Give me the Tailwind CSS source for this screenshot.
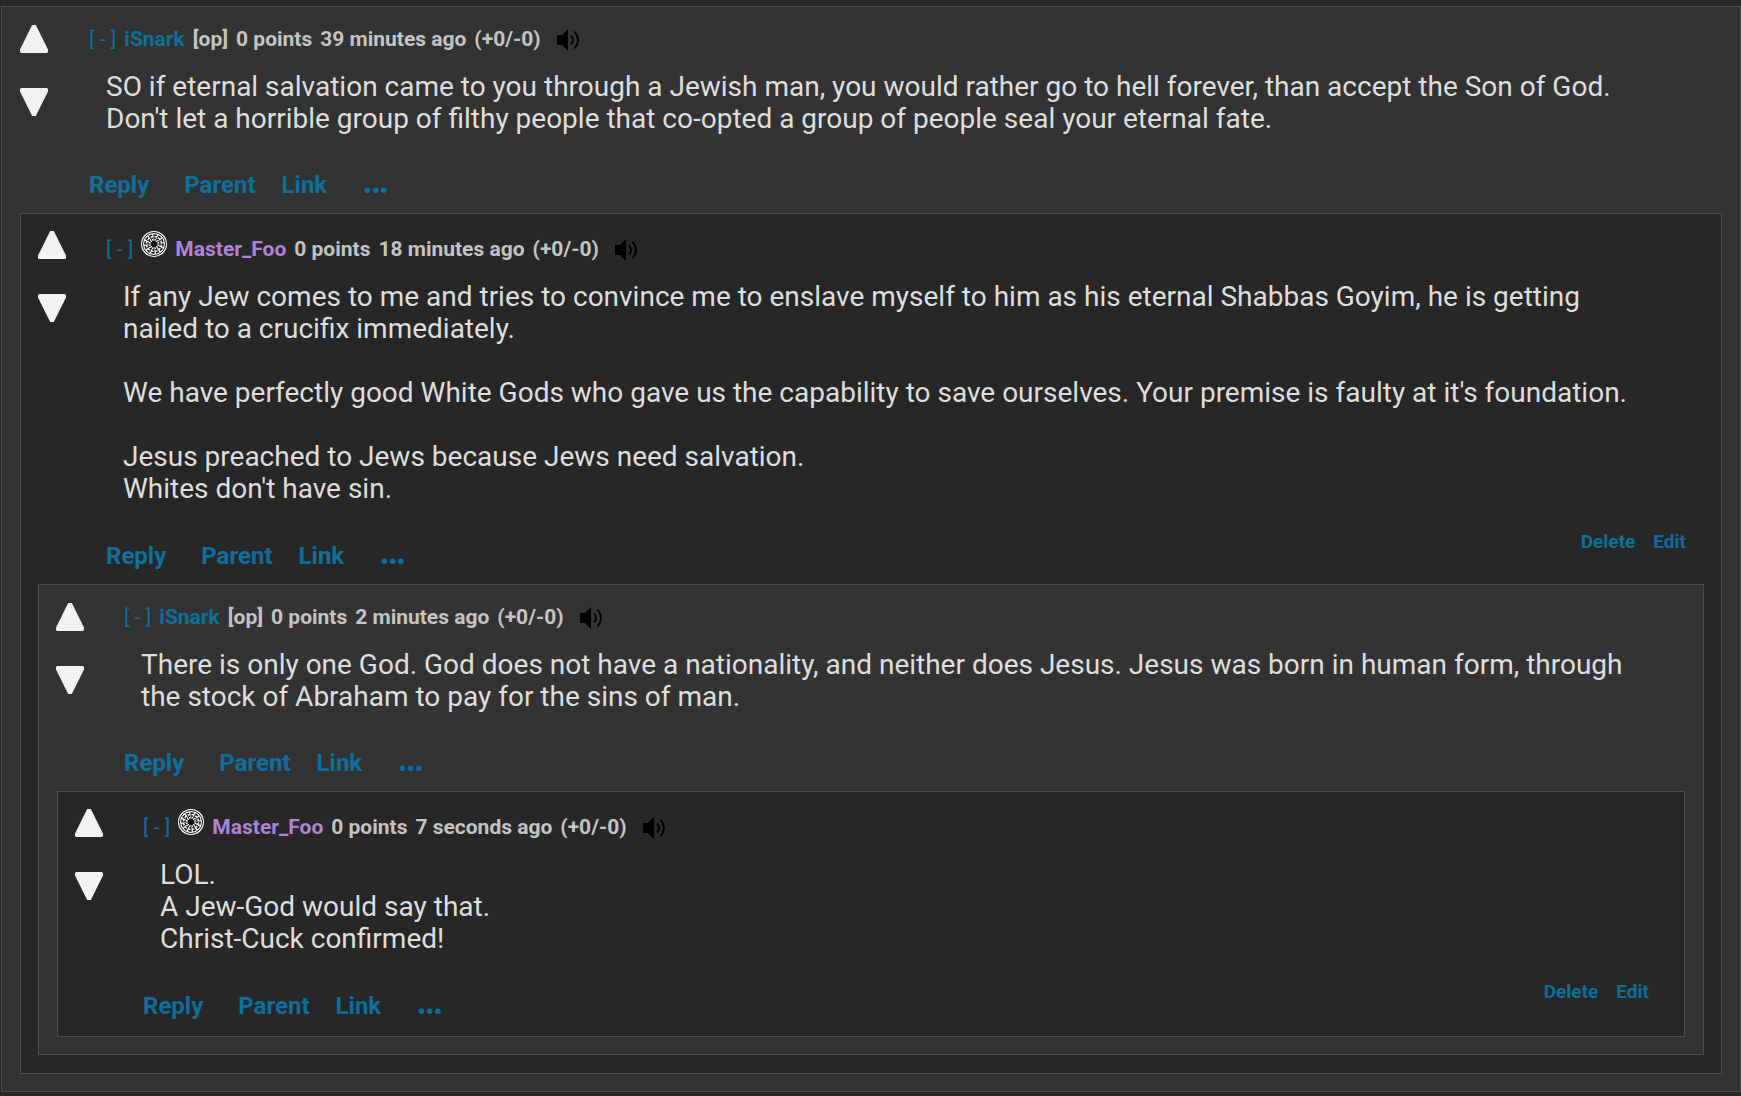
<!DOCTYPE html>
<html lang="en">
<head>
    <meta charset="UTF-8">
    <meta name="viewport" content="width=device-width, initial-scale=1.0">
    <title>Comments</title>
    <script src="https://cdn.jsdelivr.net/npm/@tailwindcss/browser@4"></script>
</head>
<body class="bg-[#272727] pt-[6px] pl-px font-[Roboto,sans-serif] text-[#dedede]">
    <!-- Shared icons -->
    <svg class="hidden">
        <symbol id="up" viewBox="0 0 28 28">
            <path d="M12.2 0h3.6L28 24.5V27l-1 1H1l-1-1v-2.5z" fill="#f2f2f2"/>
        </symbol>
        <symbol id="down" viewBox="0 0 28 28">
            <path d="M12.2 28h3.6L28 3.5V1l-1-1H1L0 1v2.5z" fill="#f2f2f2"/>
        </symbol>
        <symbol id="speaker" viewBox="0 0 24 22">
            <path d="M0 6h5l6-6v22l-6-6H0z" fill="#000"/>
            <path d="M14 6.500q4 4.500 0 9M17.500 2.500q7 8.500 0 17" fill="none" stroke="#000" stroke-width="1.800"/>
        </symbol>
        <symbol id="avatar" viewBox="0 0 26 26">
            <circle cx="13" cy="13" r="13" fill="#fff"/>
            <g fill="none" stroke="#111">
                <circle cx="13" cy="13" r="11.500" stroke-width="1"/>
                <circle cx="13" cy="13" r="9" stroke-width="1.500" stroke-dasharray="2.700 2"/>
                <circle cx="13" cy="13" r="6" stroke-width="1.500" stroke-dasharray="1.600 1.500"/>
                <path d="M13 3v20M3 13h20M8 4.300l10 17.400M18 4.300L8 21.700M4.300 8l17.400 10M4.300 18L21.700 8" stroke-width="1"/>
            </g>
            <circle cx="13" cy="13" r="3" fill="#111"/>
        </symbol>
    </svg>

    <article class="border border-[#4c4c4c] bg-[#333] pb-[17px]">
        <div class="flex pt-[18px] pl-[18px]">
            <div class="flex w-[69px] shrink-0 flex-col gap-[35px]">
                <button aria-label="Upvote" class="size-7"><svg class="size-7"><use href="#up"/></svg></button>
                <button aria-label="Downvote" class="size-7"><svg class="size-7"><use href="#down"/></svg></button>
            </div>
            <div class="grow">
                <div class="flex h-[30px] items-center gap-2 text-[21px] font-bold text-[#c4c4c4]">
                    <a href="#" class="font-normal text-[#0f6f9c]">[ - ]</a>
                    <a href="#" class="text-[#0f6f9c]">iSnark</a>
                    <span>[op]</span>
                    <span>0 points</span>
                    <span>39 minutes ago</span>
                    <span>(+0/-0)</span>
                    <button aria-label="Listen" class="ml-2"><svg class="h-[22px] w-6"><use href="#speaker"/></svg></button>
                </div>
                <div class="mt-[16px] mr-[76px] ml-[17px] text-[28px] leading-8">
                    <p>SO if eternal salvation came to you through a Jewish man, you would rather go to hell forever, than accept the Son of God. Don't let a horrible group of filthy people that co-opted a group of people seal your eternal fate.</p>
                </div>
                <div class="mt-[18px] flex h-[60px] items-center text-[24px] font-bold text-[#0f6f9c]">
                    <div class="flex items-baseline leading-9">
                        <a href="#" class="mr-[35px]">Reply</a>
                        <a href="#" class="mr-[26px]">Parent</a>
                        <a href="#" class="mr-[35px]">Link</a>
                        <button aria-label="More" class="text-[36px] leading-none">…</button>
                    </div>
                </div>
            </div>
        </div>

        <article class="mx-[18px] border border-[#4c4c4c] bg-[#272727] pb-[18px]">
            <div class="flex pt-[17px] pl-[17px]">
                <div class="flex w-[68px] shrink-0 flex-col gap-[35px]">
                    <button aria-label="Upvote" class="size-7"><svg class="size-7"><use href="#up"/></svg></button>
                    <button aria-label="Downvote" class="size-7"><svg class="size-7"><use href="#down"/></svg></button>
                </div>
                <div class="grow">
                    <div class="flex h-[38px] items-center gap-2 text-[21px] font-bold text-[#c4c4c4]">
                        <a href="#" class="font-normal text-[#0f6f9c]">[ - ]</a>
                        <svg class="mb-3 size-[26px]"><use href="#avatar"/></svg>
                        <a href="#" class="text-[#b083d8]">Master_Foo</a>
                        <span>0 points</span>
                        <span>18 minutes ago</span>
                        <span>(+0/-0)</span>
                        <button aria-label="Listen" class="ml-2"><svg class="h-[22px] w-6"><use href="#speaker"/></svg></button>
                    </div>
                    <div class="mt-3 mr-[76px] ml-[17px] text-[28px] leading-8">
                        <p>If any Jew comes to me and tries to convince me to enslave myself to him as his eternal Shabbas Goyim, he is getting nailed to a crucifix immediately.</p>
                        <p class="mt-8">We have perfectly good White Gods who gave us the capability to save ourselves. Your premise is faulty at it's foundation.</p>
                        <p class="mt-8">Jesus preached to Jews because Jews need salvation.<br>Whites don't have sin.</p>
                    </div>
                    <div class="mt-[19px] flex h-[60px] items-center text-[24px] font-bold text-[#0f6f9c]">
                        <div class="flex items-baseline leading-9">
                            <a href="#" class="mr-[35px]">Reply</a>
                            <a href="#" class="mr-[26px]">Parent</a>
                            <a href="#" class="mr-[35px]">Link</a>
                            <button aria-label="More" class="text-[36px] leading-none">…</button>
                        </div>
                        <div class="mr-[35px] mb-6 ml-auto flex gap-[18px] text-[19px]">
                            <a href="#">Delete</a>
                            <a href="#">Edit</a>
                        </div>
                    </div>
                </div>
            </div>

            <article class="mx-[17px] border border-[#4c4c4c] bg-[#333] pb-[17px]">
                <div class="flex pt-[18px] pl-[17px]">
                    <div class="flex w-[68px] shrink-0 flex-col gap-[35px]">
                        <button aria-label="Upvote" class="size-7"><svg class="size-7"><use href="#up"/></svg></button>
                        <button aria-label="Downvote" class="size-7"><svg class="size-7"><use href="#down"/></svg></button>
                    </div>
                    <div class="grow">
                        <div class="flex h-[30px] items-center gap-2 text-[21px] font-bold text-[#c4c4c4]">
                            <a href="#" class="font-normal text-[#0f6f9c]">[ - ]</a>
                            <a href="#" class="text-[#0f6f9c]">iSnark</a>
                            <span>[op]</span>
                            <span>0 points</span>
                            <span>2 minutes ago</span>
                            <span>(+0/-0)</span>
                            <button aria-label="Listen" class="ml-2"><svg class="h-[22px] w-6"><use href="#speaker"/></svg></button>
                        </div>
                        <div class="mt-[16px] mr-[76px] ml-[17px] text-[28px] leading-8">
                            <p>There is only one God. God does not have a nationality, and neither does Jesus. Jesus was born in human form, through the stock of Abraham to pay for the sins of man.</p>
                        </div>
                        <div class="mt-[18px] flex h-[60px] items-center text-[24px] font-bold text-[#0f6f9c]">
                            <div class="flex items-baseline leading-9">
                                <a href="#" class="mr-[35px]">Reply</a>
                                <a href="#" class="mr-[26px]">Parent</a>
                                <a href="#" class="mr-[35px]">Link</a>
                                <button aria-label="More" class="text-[36px] leading-none">…</button>
                            </div>
                        </div>
                    </div>
                </div>

                <article class="mx-[18px] border border-[#4c4c4c] bg-[#272727]">
                    <div class="flex pt-[17px] pl-[17px]">
                        <div class="flex w-[68px] shrink-0 flex-col gap-[35px]">
                            <button aria-label="Upvote" class="size-7"><svg class="size-7"><use href="#up"/></svg></button>
                            <button aria-label="Downvote" class="size-7"><svg class="size-7"><use href="#down"/></svg></button>
                        </div>
                        <div class="grow">
                            <div class="flex h-[38px] items-center gap-2 text-[21px] font-bold text-[#c4c4c4]">
                                <a href="#" class="font-normal text-[#0f6f9c]">[ - ]</a>
                                <svg class="mb-3 size-[26px]"><use href="#avatar"/></svg>
                                <a href="#" class="text-[#b083d8]">Master_Foo</a>
                                <span>0 points</span>
                                <span>7 seconds ago</span>
                                <span>(+0/-0)</span>
                                <button aria-label="Listen" class="ml-2"><svg class="h-[22px] w-6"><use href="#speaker"/></svg></button>
                            </div>
                            <div class="mt-3 mr-[76px] ml-[17px] text-[28px] leading-8">
                                <p>LOL.<br>A Jew-God would say that.<br>Christ-Cuck confirmed!</p>
                            </div>
                            <div class="mt-[19px] mb-[2px] flex h-[60px] items-center text-[24px] font-bold text-[#0f6f9c]">
                                <div class="flex items-baseline leading-9">
                                    <a href="#" class="mr-[35px]">Reply</a>
                                    <a href="#" class="mr-[26px]">Parent</a>
                                    <a href="#" class="mr-[35px]">Link</a>
                                    <button aria-label="More" class="text-[36px] leading-none">…</button>
                                </div>
                                <div class="mr-[35px] mb-6 ml-auto flex gap-[18px] text-[19px]">
                                    <a href="#">Delete</a>
                                    <a href="#">Edit</a>
                                </div>
                            </div>
                        </div>
                    </div>
                </article>
            </article>
        </article>
    </article>
</body>
</html>
